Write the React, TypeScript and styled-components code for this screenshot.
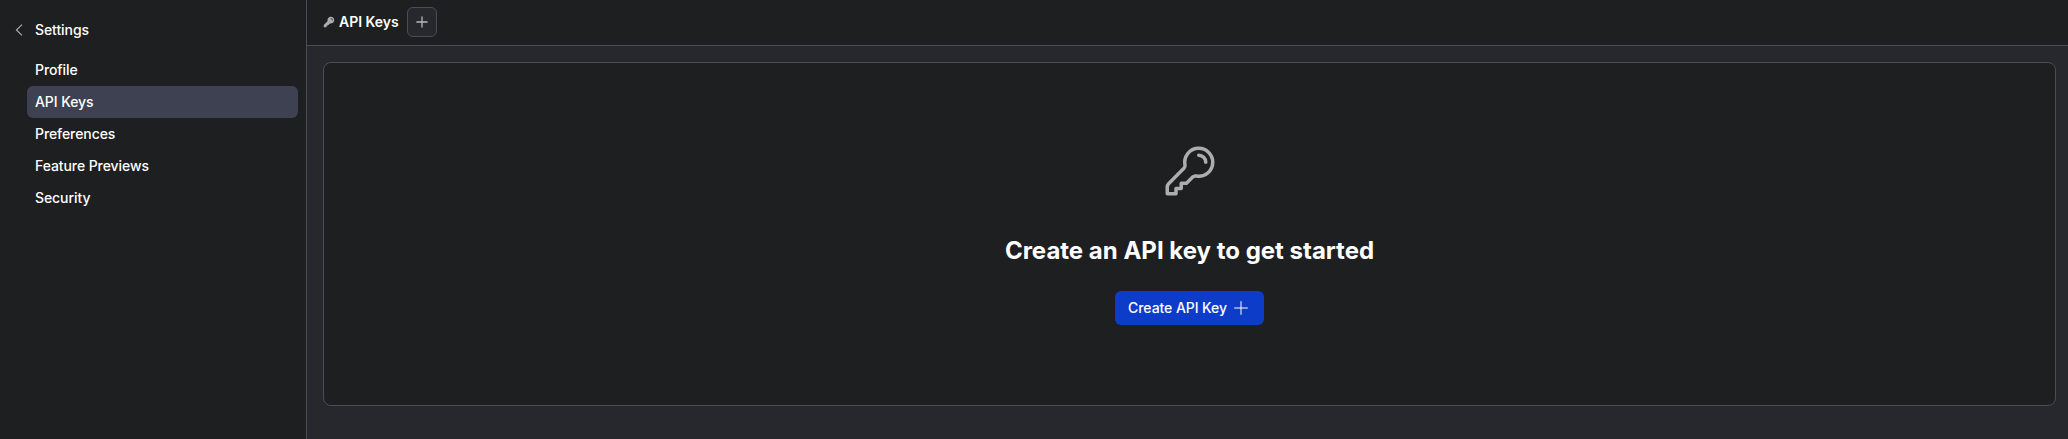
import React from "react";
import styled, { createGlobalStyle } from "styled-components";

const GlobalStyle = createGlobalStyle`
  *, *::before, *::after { box-sizing: border-box; }
  body {
    margin: 0;
    background: #1e1f21;
    color: #fff;
    font-family: Inter, "Liberation Sans", sans-serif;
    font-size: 14px;
    line-height: 20px;
    -webkit-font-smoothing: antialiased;
  }
  button { font: inherit; color: inherit; margin: 0; }
  svg { display: block; flex: none; }
`;

const Shell = styled.div`
  display: flex;
  height: 100vh;
  overflow: hidden;
`;

const Sidebar = styled.aside`
  width: 307px;
  flex: none;
  padding: 20px 8px 0 15px;
  background: #1e1f21;
  border-right: 1px solid #4c4d56;
  letter-spacing: -0.08px;
`;

const BackLink = styled.div`
  display: flex;
  align-items: center;
  gap: 12px;
  height: 20px;
  font-weight: 500;
`;

const Nav = styled.nav`
  display: flex;
  flex-direction: column;
  margin: 14px 0 0 12px;
`;

const NavItem = styled.a<{ $active?: boolean }>`
  display: flex;
  align-items: center;
  height: 32px;
  padding: 0 8px;
  border-radius: 6px;
  font-weight: 500;
  background: ${({ $active }) => ($active ? "#3d4152" : "transparent")};
`;

const Main = styled.main`
  flex: 1;
  min-width: 0;
  display: flex;
  flex-direction: column;
  background: #27282d;
`;

const Header = styled.header`
  display: flex;
  align-items: center;
  height: 46px;
  flex: none;
  padding: 0 16px 1px;
  background: #1e1f21;
  border-bottom: 1px solid #4c4d56;
`;

const Title = styled.h1`
  margin: 0 8px 0 4px;
  font-size: 14px;
  line-height: 20px;
  font-weight: 600;
  letter-spacing: -0.04px;
`;

const AddButton = styled.button`
  display: flex;
  align-items: center;
  justify-content: center;
  width: 30px;
  height: 30px;
  padding: 0;
  border: 1px solid #4c4d56;
  border-radius: 6px;
  background: #27282d;
`;

const Panel = styled.section`
  display: flex;
  flex-direction: column;
  align-items: center;
  height: 344px;
  margin: 16px 12px 0 16px;
  padding-top: 80px;
  border: 1px solid #4c4d56;
  border-radius: 8px;
  background: #1e1f21;
`;

const Heading = styled.h2`
  margin: 36px 0 24px;
  font-size: 24px;
  line-height: 32px;
  font-weight: 700;
`;

const PrimaryButton = styled.button`
  display: flex;
  align-items: center;
  justify-content: center;
  gap: 4px;
  width: 149px;
  height: 34px;
  padding: 0;
  border: 0;
  border-radius: 6px;
  background: #0d3cc9;
  font-weight: 500;
  letter-spacing: -0.07px;
`;

const NAV_ITEMS = ["Profile", "API Keys", "Preferences", "Feature Previews", "Security"];

const ChevronLeft = () => (
  <svg width="8" height="12" viewBox="0 0 8 12" fill="none" stroke="#b0b0b0" strokeWidth="1.1">
    <path d="M7 .6 1.4 6 7 11.4" />
  </svg>
);

const Plus = ({ size, color, width = 1 }: { size: number; color: string; width?: number }) => (
  <svg width={size} height={size} viewBox="0 0 20 20" fill="none" stroke={color} strokeWidth={width} strokeLinecap="round">
    <path d="M10 3.6v12.8M3.6 10h12.8" />
  </svg>
);

const KeyOutline = () => (
  <svg width="56" height="56" viewBox="0 0 24 24" fill="none" stroke="#adadad" strokeWidth="1.5" strokeLinecap="round" strokeLinejoin="round">
    <path d="M15.75 5.25a3 3 0 0 1 3 3m3 0a6 6 0 0 1-7.029 5.912c-.563-.097-1.159.026-1.563.43L10.5 17.25H8.25v2.25H6v2.25H2.25v-2.818c0-.597.237-1.17.659-1.591l6.499-6.499c.404-.404.527-1 .43-1.563A6 6 0 1 1 21.75 8.25Z" />
  </svg>
);

const KeySolid = () => (
  <svg width="12" height="12" viewBox="0 0 24 24" fill="#adadad">
    <path fillRule="evenodd" d="M15.75 1.5a6.75 6.75 0 0 0-6.651 7.906c.067.39-.032.717-.221.906l-6.5 6.499a3 3 0 0 0-.878 2.121v2.818c0 .414.336.75.75.75H6a.75.75 0 0 0 .75-.75v-1.5h1.5A.75.75 0 0 0 9 19.5V18h1.5a.75.75 0 0 0 .53-.22l2.658-2.658c.19-.189.517-.288.906-.22A6.75 6.75 0 1 0 15.75 1.5Zm0 3a.75.75 0 0 0 0 1.5A2.25 2.25 0 0 1 18 8.25a.75.75 0 0 0 1.5 0 3.75 3.75 0 0 0-3.75-3.75Z" clipRule="evenodd" />
  </svg>
);

export default function App() {
  return (
    <>
      <GlobalStyle />
      <Shell>
        <Sidebar>
          <BackLink>
            <ChevronLeft />
            Settings
          </BackLink>
          <Nav>
            {NAV_ITEMS.map((item) => (
              <NavItem key={item} $active={item === "API Keys"}>{item}</NavItem>
            ))}
          </Nav>
        </Sidebar>
        <Main>
          <Header>
            <KeySolid />
            <Title>API Keys</Title>
            <AddButton aria-label="Add API key">
              <Plus size={16} color="#b8b8b8" width={1.6} />
            </AddButton>
          </Header>
          <Panel>
            <KeyOutline />
            <Heading>Create an API key to get started</Heading>
            <PrimaryButton>
              Create API Key
              <Plus size={20} color="#ffffff" />
            </PrimaryButton>
          </Panel>
        </Main>
      </Shell>
    </>
  );
}
